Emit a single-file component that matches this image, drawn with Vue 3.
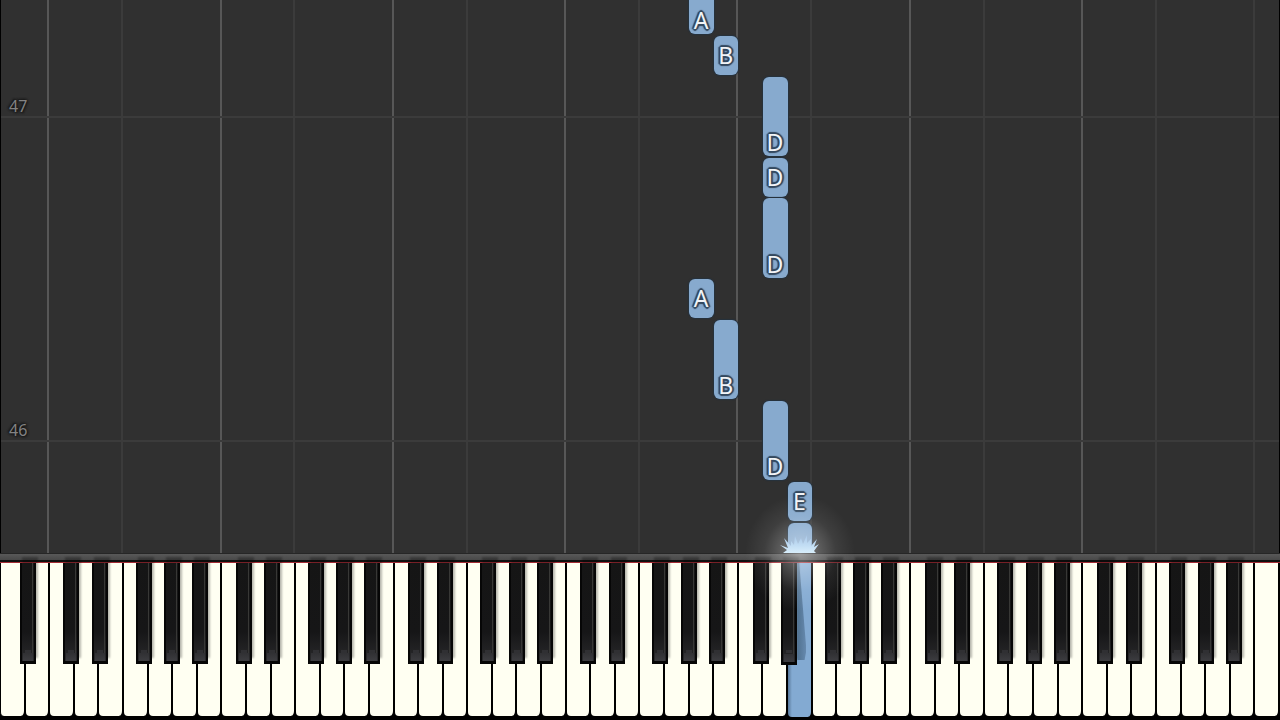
<script setup>
const WHITE = 52
const pct = (n) => `${(n / WHITE) * 100}%`

const whiteKeys = Array.from({ length: WHITE }, (_, i) => ({ id: i, pressed: i === 32 }))

// Centres of the black keys inside an octave, in white-key widths from C
const blackOffsets = [0.9, 2.07, 3.83, 4.99, 6.13]
const blackKeys = [{ at: 1.15, pressed: false }]
for (let octave = 0; octave < 7; octave++) {
  blackOffsets.forEach((o, i) => {
    blackKeys.push({ at: 2 + octave * 7 + o, pressed: octave === 4 && i === 1 })
  })
}

const lines = []
for (let c = 2; c < WHITE; c += 7) {
  lines.push({ at: c, strong: c < 51 })
  if (c + 3 < WHITE) lines.push({ at: c + 3, strong: false })
}

const measures = [
  { n: 47, bottom: 435 },
  { n: 46, bottom: 111 },
]

// bottom and height are distances above the keyboard rail
const notes = [
  { name: 'A', key: 28, bottom: 519, height: 79 },
  { name: 'B', key: 29, bottom: 478, height: 39 },
  { name: 'D', key: 31, bottom: 397, height: 79 },
  { name: 'D', key: 31, bottom: 356, height: 39 },
  { name: 'D', key: 31, bottom: 275, height: 80 },
  { name: 'A', key: 28, bottom: 235, height: 39 },
  { name: 'B', key: 29, bottom: 154, height: 79 },
  { name: 'D', key: 31, bottom: 73, height: 79 },
  { name: 'E', key: 32, bottom: 32, height: 39 },
  { name: '', key: 32, bottom: -9, height: 39 },
]
</script>

<template>
  <main class="player">
    <section class="roll" aria-label="Falling notes">
      <div
        v-for="l in lines"
        :key="l.at"
        class="line"
        :class="{ strong: l.strong }"
        :style="{ left: pct(l.at) }"
      ></div>
      <div v-for="m in measures" :key="m.n" class="measure" :style="{ bottom: m.bottom + 'px' }">
        <span>{{ m.n }}</span>
      </div>
      <div
        v-for="(n, i) in notes"
        :key="i"
        class="note"
        :class="{ long: n.height > 40 }"
        :style="{ left: pct(n.key), width: pct(1), bottom: n.bottom + 'px', height: n.height + 'px' }"
      >{{ n.name }}</div>
    </section>

    <div class="rail"></div>

    <section class="keyboard" aria-label="Piano keyboard">
      <button
        v-for="k in whiteKeys"
        :key="k.id"
        type="button"
        class="white"
        :class="{ pressed: k.pressed }"
        :aria-label="'White key ' + (k.id + 1)"
      ></button>
      <button
        v-for="(k, i) in blackKeys"
        :key="'b' + i"
        type="button"
        class="black"
        :class="{ pressed: k.pressed }"
        :style="{ left: pct(k.at) }"
        :aria-label="'Black key ' + (i + 1)"
      ></button>
      <div class="glow" :style="{ left: pct(32.5) }"></div>
      <svg class="burst" :style="{ left: pct(32.5) }" viewBox="0 0 40 20" aria-hidden="true">
        <defs>
          <linearGradient id="flare" x1="0" y1="0" x2="0" y2="1">
            <stop offset="0" stop-color="#a9c8e8" />
            <stop offset="0.6" stop-color="#c3def4" />
            <stop offset="1" stop-color="#d8eefb" />
          </linearGradient>
        </defs>
        <path
          fill="url(#flare)"
          d="M3 20 L7 17 L0 12 L8 15 L4 5 L11 13 L11 8 L14 12 L15 3 L18 11 L21 5 L23 11 L27 2 L27 10 L31 6 L31 13 L37 6 L34 14 L39 11 L34 18 L36 20 Z"
        />
      </svg>
    </section>
  </main>
</template>

<style>
body {
  margin: 0;
  background: #000;
}
</style>

<style scoped>
.player {
  display: flex;
  flex-direction: column;
  height: 100vh;
  overflow: hidden;
  background: #000;
  font-family: "Noto Sans", sans-serif;
}
.roll {
  position: relative;
  flex: 1;
  overflow: hidden;
  background: #303030;
  box-shadow: inset 1px 0 #000, inset -1px 0 #000;
}
.line {
  position: absolute;
  top: 0;
  bottom: 0;
  width: 2px;
  margin-left: -2px;
  background: #3b3b3b;
}
.line.strong {
  background: #575757;
}
.measure {
  position: absolute;
  left: 1px;
  right: 1px;
  height: 2px;
  background: #3b3b3b;
}
.measure span {
  position: absolute;
  left: 8px;
  bottom: 0;
  font-size: 16px;
  line-height: 24px;
  color: #838383;
  text-shadow: 0 0 2px #181818, 0 0 3px #181818, 1px 1px 2px #181818, -1px -1px 2px #181818;
}
.note {
  position: absolute;
  display: flex;
  box-sizing: border-box;
  align-items: center;
  justify-content: center;
  padding: 0 1px 1px 0;
  border-radius: 6px;
  background: #87aace;
  box-shadow: 0 0 1px 1px #26323e;
  color: #f1f4f7;
  font-size: 23px;
  line-height: 26px;
  text-shadow: 1px 1px 1px #34495f, -1px 1px 1px #34495f, 1px -1px 1px #34495f, -1px -1px 1px #34495f,
    2px 0 1px #34495f, -2px 0 1px #34495f, 0 2px 1px #34495f, 0 -2px 1px #34495f;
}
.note.long {
  align-items: flex-end;
}
.rail {
  height: 9px;
  box-sizing: border-box;
  border-top: 1px solid #262626;
  border-bottom: 2px solid #101010;
  background: linear-gradient(#595959, #484848);
}
.keyboard {
  position: relative;
  display: flex;
  height: 158px;
  box-sizing: border-box;
  padding-bottom: 4px;
  border-top: 1px solid #a52c35;
}
button {
  margin: 0;
  padding: 0;
  border: 0;
}
.white {
  flex: 1;
  box-sizing: border-box;
  border-right: 2px solid #000;
  border-radius: 0 0 5px 4px;
  background: #fffff2;
}
.white:first-child {
  border-left: 1px solid #000;
}
.white.pressed {
  margin-bottom: -1px;
  background: linear-gradient(90deg, #587899, #83aad2 4px, #83aad2);
}
.black {
  position: absolute;
  top: 0;
  width: 16px;
  height: 101px;
  margin-left: -8px;
  box-sizing: border-box;
  border: solid #060606;
  border-width: 0 2px 3px 2px;
  background:
    linear-gradient(#303033, #3c3c40) 50% 100% / 10px 8px no-repeat,
    linear-gradient(#303033, #303033) 50% 87px / 6px 3px no-repeat,
    linear-gradient(90deg, transparent 10px, #383836 10px, #383836 11px, transparent 11px),
    linear-gradient(#151515, #161617 70%, #29292b);
  box-shadow: 2px -6px 2px rgba(0, 0, 0, 0.28);
}
.black.pressed {
  height: 102px;
}
.black.pressed::after {
  content: "";
  position: absolute;
  top: 0;
  left: 14px;
  width: 9px;
  height: 97px;
  background: linear-gradient(90deg, #50718f, #6689ae);
  clip-path: polygon(0 0, 20% 0, 100% 90%, 80% 100%, 0 100%);
}
.glow {
  position: absolute;
  top: -68px;
  width: 110px;
  height: 116px;
  margin-left: -55px;
  background: radial-gradient(closest-side, rgba(255, 255, 255, 0.42), rgba(255, 255, 255, 0.22) 35%, rgba(255, 255, 255, 0.07) 65%, transparent);
  pointer-events: none;
}
.burst {
  position: absolute;
  top: -30px;
  width: 40px;
  height: 20px;
  margin-left: -20px;
}
</style>
